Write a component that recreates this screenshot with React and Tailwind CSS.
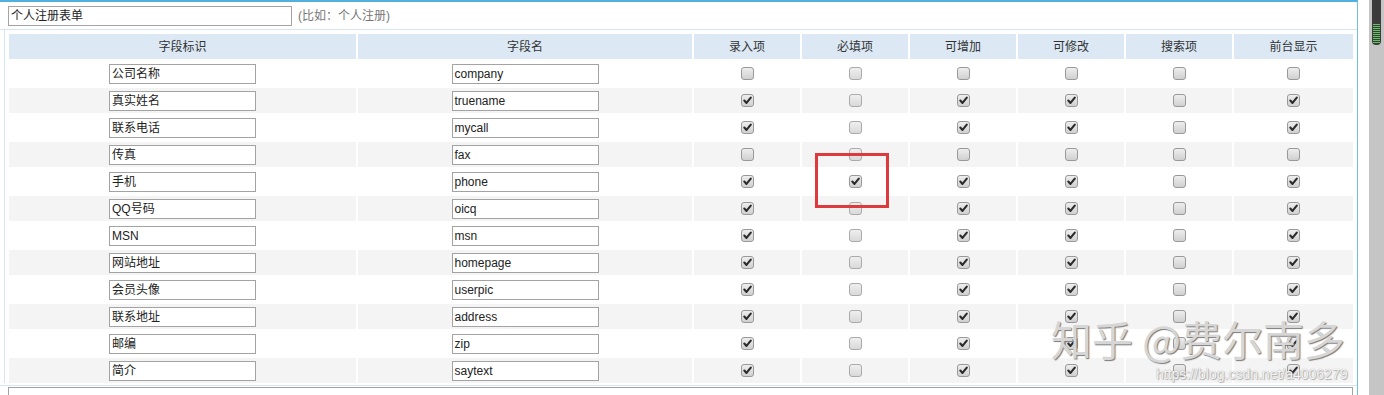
import React from "react";

const cols = [
  { label: "字段标识", w: "w-[347px]" },
  { label: "字段名", w: "w-[334px]" },
  { label: "录入项", w: "w-[106px]" },
  { label: "必填项", w: "w-[106px]" },
  { label: "可增加", w: "w-[106px]" },
  { label: "可修改", w: "w-[106px]" },
  { label: "搜索项", w: "w-[106px]" },
  { label: "前台显示", w: "w-[119px]" },
];

// flags: 录入, 必填, 可增加, 可修改, 搜索, 前台
const on = [1, 0, 1, 1, 0, 1];
const off = [0, 0, 0, 0, 0, 0];
const fields = [
  { title: "公司名称", name: "company", flags: off },
  { title: "真实姓名", name: "truename", flags: on },
  { title: "联系电话", name: "mycall", flags: on },
  { title: "传真", name: "fax", flags: off },
  { title: "手机", name: "phone", flags: [1, 1, 1, 1, 0, 1] },
  { title: "QQ号码", name: "oicq", flags: on },
  { title: "MSN", name: "msn", flags: on },
  { title: "网站地址", name: "homepage", flags: on },
  { title: "会员头像", name: "userpic", flags: on },
  { title: "联系地址", name: "address", flags: on },
  { title: "邮编", name: "zip", flags: on },
  { title: "简介", name: "saytext", flags: on },
];

function Check({ checked, dim }) {
  return (
    <span
      className={`relative inline-block w-[13px] h-[13px] rounded-[3px] border ${
        dim
          ? "border-[#aaaaaa] bg-gradient-to-b from-[#efefef] to-[#d9d9d9]"
          : "border-[#999999] bg-gradient-to-b from-[#eeeeee] to-[#d0d0d0]"
      }`}
    >
      {checked && (
        <svg className="absolute left-0 top-0 w-[11px] h-[11px]" viewBox="0 0 11 11">
          <path d="M2.3 5.6 L4.5 7.9 L8.8 2.6" fill="none" stroke="#2b2b2b" strokeWidth="2.1" strokeLinecap="round" strokeLinejoin="round" />
        </svg>
      )}
    </span>
  );
}

function TextBox({ value }) {
  return (
    <div className="w-[147px] h-[20px] border border-[#a3a3a3] bg-white pl-[2px] flex items-center text-[12px] text-[#222] leading-none">
      {value}
    </div>
  );
}

export default function App() {
  return (
    <div className="relative w-[1384px] h-[395px] flex bg-white overflow-hidden font-['Liberation_Sans','Noto_Sans_CJK_SC',sans-serif] text-[12px] text-[#333]">
      <div className="w-[1358px] h-full shrink-0 border-t-2 border-t-[#52b0df] border-r border-r-[#72bde0]">
        {/* form title */}
        <div className="h-[28px] flex items-center pl-[8px] gap-[6px] border-b border-[#d6e6f1]">
          <div className="w-[284px] h-[20px] border border-[#a3a3a3] pl-[2px] flex items-center text-[#222]">
            个人注册表单
          </div>
          <span className="text-[#777]">(比如：个人注册)</span>
        </div>

        {/* fields table */}
        <div className="ml-[4px] border-l border-[#d6e6f1] pl-[4px] pt-[4px] flex flex-col gap-[2px]">
          <div className="flex gap-[2px] h-[25px] shrink-0">
            {cols.map((c) => (
              <div key={c.label} className={`${c.w} bg-[#dce9f5] flex items-center justify-center`}>
                {c.label}
              </div>
            ))}
          </div>
          {fields.map((f, i) => (
            <div key={f.name} className="flex gap-[2px] h-[25px] shrink-0">
              <div className={`${cols[0].w} flex items-center justify-center ${i % 2 ? "bg-[#f4f4f4]" : "bg-white"}`}>
                <TextBox value={f.title} />
              </div>
              <div className={`${cols[1].w} flex items-center justify-center ${i % 2 ? "bg-[#f4f4f4]" : "bg-white"}`}>
                <TextBox value={f.name} />
              </div>
              {f.flags.map((v, k) => (
                <div
                  key={k}
                  className={`${cols[k + 2].w} flex items-center justify-center ${i % 2 ? "bg-[#f4f4f4]" : "bg-white"}`}
                >
                  <Check checked={!!v} dim={k === 1 && !v} />
                </div>
              ))}
            </div>
          ))}
        </div>

        {/* next row */}
        <div className="mt-[2px] border-t border-[#d6e6f1] pt-[1px] pl-[8px] pr-[4px]">
          <div className="h-[20px] border border-[#a3a3a3]" />
        </div>
      </div>

      <div className="w-[11px] shrink-0" />
      {/* scrollbar */}
      <div className="w-[15px] h-full shrink-0 bg-[#c5c5c5] flex justify-center items-start">
        <div className="w-[9px] h-[45px] bg-[#3b3b3b] rounded-b-[4px] flex flex-col items-center justify-end pb-[2px] gap-[1px]">
          {Array.from({ length: 10 }).map((_, i) => (
            <div key={i} className="w-[7px] h-[1px] shrink-0 bg-[#5fc45f]" />
          ))}
        </div>
      </div>

      {/* annotation */}
      <div className="absolute left-[815px] top-[153px] w-[74px] h-[55px] border-[3px] border-[#dc3a3d]" />

      {/* watermarks */}
      <div className="absolute left-[1051px] top-[318px] text-[41px] leading-none text-[#d6d6d6] font-['Noto_Sans_CJK_SC',sans-serif] [text-shadow:1px_1px_1px_#7a7a7a] whitespace-nowrap">
        知乎 @费尔南多
      </div>
      <div className="absolute left-[1156px] top-[367px] text-[14px] leading-none text-[#f4f4f4] font-['Liberation_Sans',sans-serif] [text-shadow:0_0_1px_#9a9a9a,1px_1px_1px_#b0b0b0] whitespace-nowrap">
        https://blog.csdn.net/a4006279
      </div>
    </div>
  );
}
